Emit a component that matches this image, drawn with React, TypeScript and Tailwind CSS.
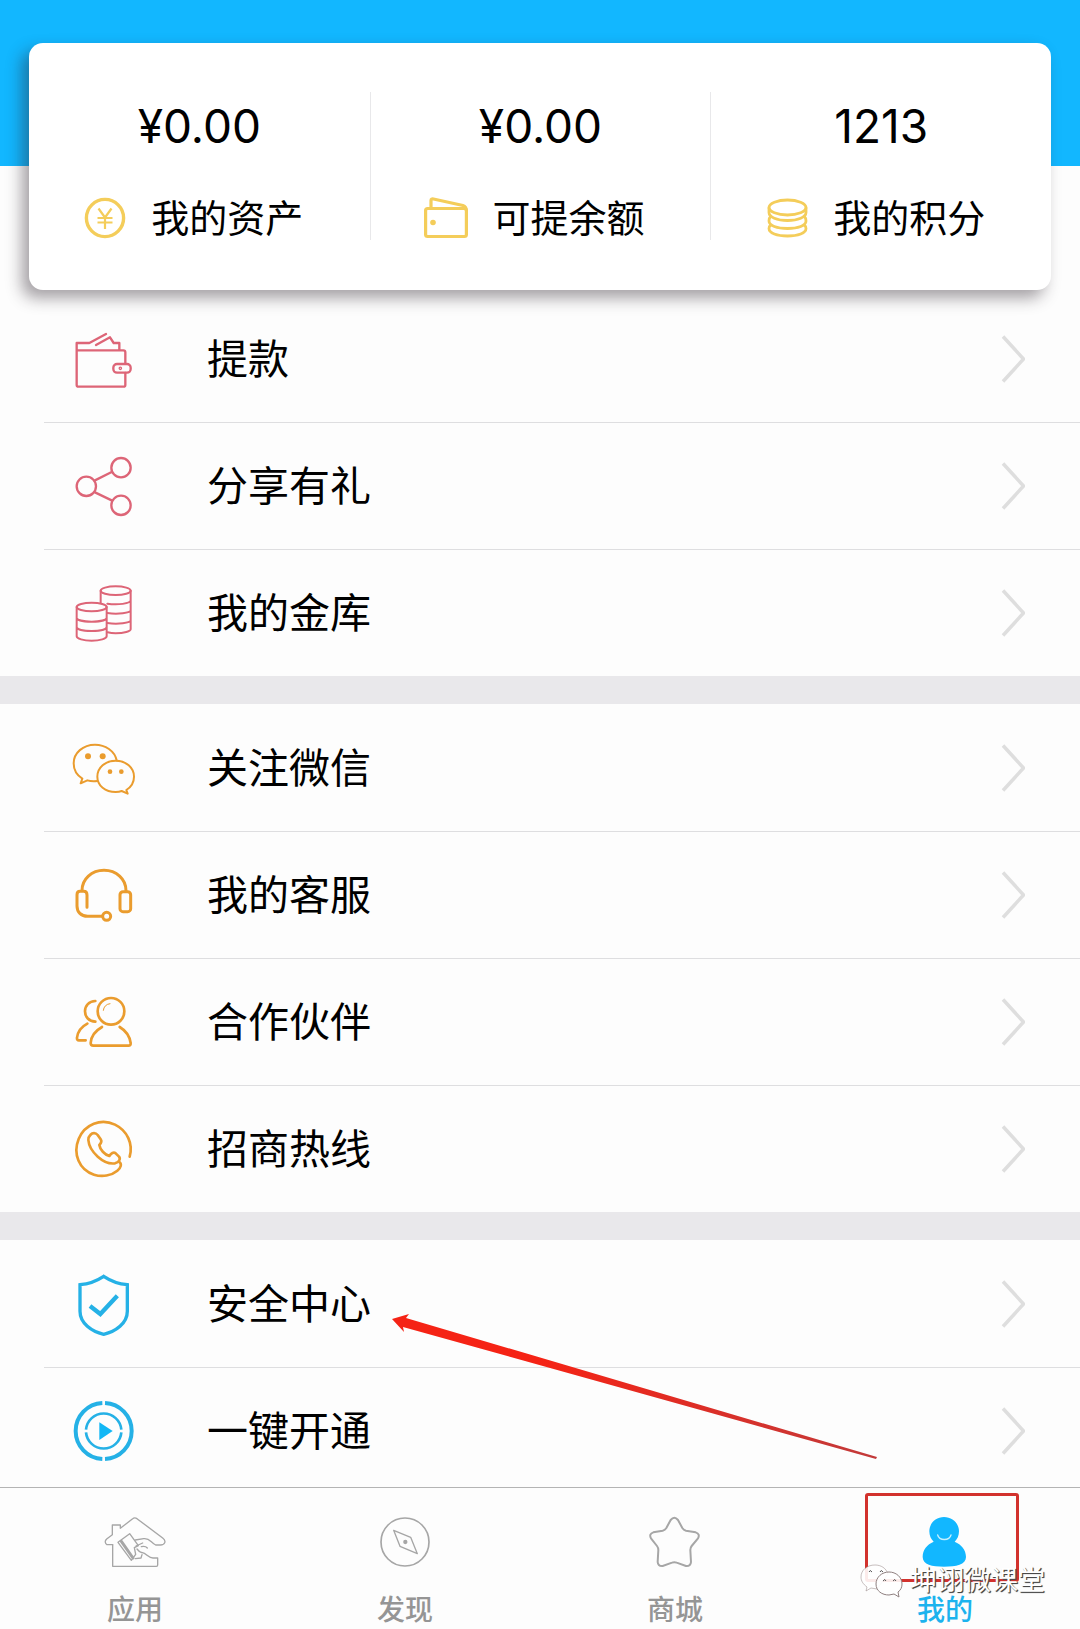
import type { ReactNode } from 'react'

const YELLOW = '#f4cd5a'
const RED = '#dd6577'
const ORANGE = '#ea9c2e'
const BLUE = '#25b1e6'
const GRAY = '#a6a6a6'

// 资产卡片图标
const CoinIcon = () => (
  <svg viewBox="0 0 44 44" className="h-11 w-11 shrink-0" fill="none" stroke={YELLOW} strokeWidth="3.4">
    <circle cx="22" cy="22" r="18.6" />
    <path d="M15.5 12.5 22 21.5l6.5-9M22 21.5V33M14.5 22h15M14.5 26.5h15" strokeWidth="2.2" />
  </svg>
)

const PurseIcon = () => (
  <svg viewBox="0 0 44 44" className="h-11 w-11 shrink-0" fill="none" stroke={YELLOW} strokeWidth="3.2" strokeLinejoin="round">
    <rect x="1.6" y="12.5" width="40.8" height="28" rx="2" />
    <path d="M7 12V4.5Q7 2.500 9.500 3L39 9.500Q42.400 10.500 42.400 15" />
    <circle cx="9" cy="26.5" r="2.8" fill={YELLOW} stroke="none" />
  </svg>
)

const StackIcon = () => (
  <svg viewBox="0 0 44 44" className="h-11 w-11 shrink-0" fill="none" stroke={YELLOW} strokeWidth="2.8">
    <ellipse cx="22.5" cy="11.5" rx="18.5" ry="7.5" />
    <path d="M4 11.5v5c0 4.500 8 8 18.500 8s18.500-3.500 18.500-8v-5" />
    <path d="M5.5 20.500C4.500 21.500 4 23 4 25c0 4.500 8 7.500 18.500 7.500S41 29.500 41 25c0-2-.5-3.500-1.500-4.500" />
    <path d="M5.5 29C4.500 30 4 31 4 32.500c0 4.500 8 7.500 18.500 7.500S41 37 41 32.500c0-1.500-.5-2.500-1.500-3.500" />
  </svg>
)

function RowIcon({ box, color, width = 7, children }: { box: string; color: string; width?: number; children: ReactNode }) {
  return (
    <svg
      viewBox={box}
      className="h-16 w-16 shrink-0"
      fill="none"
      stroke={color}
      strokeWidth={width}
      strokeLinecap="round"
      strokeLinejoin="round"
    >
      {children}
    </svg>
  )
}

const WithdrawIcon = () => (
  <RowIcon box="96 50 192 192" color={RED}>
    <path d="M110 120V98h38l50-27M168 104l42-23 11 17h17v20M110 120h140q6 0 6 6v34M256 188v36q0 5-5 5H115q-5 0-5-5V120" />
    <rect x="220" y="161" width="52" height="26" rx="11" />
    <circle cx="241" cy="174" r="2" />
  </RowIcon>
)

const ShareIcon = () => (
  <RowIcon box="96 432 192 192" color={RED}>
    <circle cx="139" cy="529" r="29" />
    <circle cx="243" cy="473" r="29" />
    <circle cx="243" cy="586" r="29" />
    <path d="m165 511 50-25M165 547l50 24" />
  </RowIcon>
)

const VaultIcon = () => (
  <RowIcon box="96 813 192 192" color={RED} width={6}>
    <ellipse cx="227" cy="842" rx="45" ry="13" />
    <path d="M182 842v36M272 842v116c0 6-20 12-45 12-9 0-17-1-24-3M202 881c30 5 70 0 70-10M202 909c30 5 70 0 70-8M202 939c30 5 70 0 70-8" />
    <ellipse cx="155" cy="891" rx="45" ry="13" />
    <path d="M110 891v88c0 7 20 13 45 13s45-6 45-13v-88M110 923c0 7 20 12 45 12s45-5 45-12M110 951c0 7 20 12 45 12s45-5 45-12" />
  </RowIcon>
)

const WechatIcon = () => (
  <RowIcon box="96 46 192 192" color={ORANGE} width={6}>
    <path d="M230 119c-6-28-34-47-65-47-36 0-64 25-64 56 0 20 10 36 26 46l-5 14 20-9c10 3 19 3 30 2" />
    <path d="M259 208c14-9 23-23 23-40 0-27-24-48-55-48s-55 21-55 48 24 46 55 46c7 0 13-1 18-3l18 8z" />
    <g fill={ORANGE} stroke="none">
      <circle cx="144" cy="107" r="9" />
      <circle cx="188" cy="107" r="9" />
      <circle cx="210" cy="153" r="7" />
      <circle cx="244" cy="153" r="7" />
    </g>
  </RowIcon>
)

const ServiceIcon = () => (
  <RowIcon box="96 429 192 192" color={ORANGE} width={9}>
    <path d="M126 512c0-35 29-61 66-61s66 26 66 61M141 562v-37q0-11-10-11h-11q-9 0-9 10v34c0 18 12 31 32 31h42" />
    <rect x="240" y="515" width="32" height="60" rx="9" />
    <circle cx="200" cy="589" r="12" />
  </RowIcon>
)

const PartnerIcon = () => (
  <RowIcon box="96 90 192 192" color={ORANGE} width={8}>
    <circle cx="213" cy="154" r="40" />
    <path d="M190 151c1-11 9-19 20-20" strokeWidth="3" />
    <path d="M166 123c-19 1-31 14-31 31s12 30 31 31M142 191c-19 10-29 26-31 42q-1 8 6 8h20" />
    <path d="M186 201c-21 12-33 30-34 48q0 8 8 8h105q8 0 7-8c-3-20-13-36-33-48" />
  </RowIcon>
)

const HotlineIcon = () => (
  <RowIcon box="96 471 192 192" color={ORANGE} width={8}>
    <path d="M269 590c11-38-7-78-44-96-42-20-91-1-109 43s1 92 46 107c25 8 52 3 70-12 11-9 14-20 6-26" />
    <path d="M151 525c7-8 16-7 22 0l9 13c5 7 1 12-4 17 2 14 16 29 30 33 5-9 13-13 19-8l10 10c6 8-1 17-12 20-34 5-77-35-80-70-1-6 1-10 6-15z" />
  </RowIcon>
)

const ShieldIcon = () => (
  <RowIcon box="96 94 192 192" color={BLUE} width={10}>
    <path d="M191 107c21 14 46 23 71 25v80c0 36-35 61-71 69-36-8-71-33-71-69v-80c25-2 50-11 71-25z" strokeLinejoin="miter" />
    <path d="m150 196 31 24 51-55" strokeWidth="13" strokeLinecap="butt" strokeLinejoin="miter" />
  </RowIcon>
)

const PlayIcon = () => (
  <RowIcon box="96 477 192 192" color={BLUE}>
    <path d="M187 489a84.100 84.100 0 0 0 0 168M195 489a84.100 84.100 0 0 1 0 168" strokeWidth="12" strokeLinecap="butt" />
    <path d="M138 569a53.200 53.200 0 0 1 106 0M138 577a53.200 53.200 0 0 0 106 0" strokeWidth="8" strokeLinecap="butt" />
    <path d="m178 547 40 26-40 27z" fill="#12b7f5" stroke="none" />
  </RowIcon>
)

function TabIcon({ box, children }: { box: string; children: ReactNode }) {
  return (
    <svg viewBox={box} className="h-14 w-16" fill="none" stroke={GRAY} strokeWidth="5" strokeLinecap="round" strokeLinejoin="round">
      {children}
    </svg>
  )
}

const HomeTabIcon = () => (
  <TabIcon box="129 102 192 168">
    <g strokeWidth="4">
      <path d="M158 194v65h131q4 0 4-4v-21h-14c-14 0-18-14-34-17" />
      <path d="M158 194h-17q-10-8-1-17l17-13v-29h24v10l37-29q6-5 13 0l77 58c12 9 7 21-7 21h-14c-14-6-18-22-36-19l-25 4" />
      <path d="m174 187 35-26 26 36-12 6 4 20-13 18z" />
      <path d="m184 184 35 50" strokeWidth="9" />
      <path d="m228 198 20-9M231 207q6 8 14 11M244 200q12-3 18 4M226 236l17-2 3-10" />
    </g>
  </TabIcon>
)

const DiscoverTabIcon = () => (
  <TabIcon box="940 102 192 168">
    <circle cx="1036" cy="186" r="72" />
    <path d="m1002 151 51 21 20 49-52-22z" strokeWidth="4" />
    <circle cx="1037" cy="186" r="4" fill={GRAY} />
  </TabIcon>
)

const MallTabIcon = () => (
  <TabIcon box="129 222 192 168">
    <path
      d="M212 240q11-13 22 0l13 24q4 6 11 8l29 5q14 5 7 18l-19 23q-4 5-4 12l2 36q-1 13-15 12l-28-10q-7-3-14 0l-28 10q-14 1-15-12l2-36q0-7-4-12l-18-23q-7-13 7-18l28-5q7-2 11-8z"
      strokeWidth="6"
    />
  </TabIcon>
)

const MineTabIcon = () => (
  <TabIcon box="939 222 192 168">
    <path
      d="M1032 231c25 0 45 19 45 43 0 13-5 24-13 31 20 8 34 25 34 46 0 23-30 29-66 29s-64-6-64-29c0-21 13-38 33-46-8-7-13-18-13-31 0-24 19-43 44-43z"
      fill="#12b7ff"
      stroke="none"
    />
    <path d="M1013 285c5 18 35 18 40 0" stroke="#c5f0ff" strokeWidth="4" />
  </TabIcon>
)

const ASSETS = [
  { value: '¥0.00', label: '我的资产', icon: <CoinIcon /> },
  { value: '¥0.00', label: '可提余额', icon: <PurseIcon /> },
  { value: '1213', label: '我的积分', icon: <StackIcon /> },
]

const GROUPS = [
  [
    { label: '提款', icon: <WithdrawIcon /> },
    { label: '分享有礼', icon: <ShareIcon /> },
    { label: '我的金库', icon: <VaultIcon /> },
  ],
  [
    { label: '关注微信', icon: <WechatIcon /> },
    { label: '我的客服', icon: <ServiceIcon /> },
    { label: '合作伙伴', icon: <PartnerIcon /> },
    { label: '招商热线', icon: <HotlineIcon /> },
  ],
  [
    { label: '安全中心', icon: <ShieldIcon />, marked: true },
    { label: '一键开通', icon: <PlayIcon /> },
  ],
]

const TABS = [
  { label: '应用', icon: <HomeTabIcon /> },
  { label: '发现', icon: <DiscoverTabIcon /> },
  { label: '商城', icon: <MallTabIcon /> },
  { label: '我的', icon: <MineTabIcon />, active: true },
]

function MenuRow({ label, icon, first, marked = false }: { label: string; icon: ReactNode; first: boolean; marked?: boolean }) {
  return (
    <li className="relative pl-11">
      <a
        href="#"
        className={`flex h-[127px] items-center pl-7 pr-[55px] ${first ? '' : 'border-t border-[#dedee0]'}`}
      >
        {icon}
        <span className="ml-[71px] flex-1 text-[41px] leading-[60px]">{label}</span>
        <svg viewBox="0 0 24 48" className="h-12 w-6" fill="none" stroke="#dedede" strokeWidth="3.5">
          <path d="M2 1.5 22.500 24 2 46.500" />
        </svg>
      </a>
      {marked && (
        <svg viewBox="0 0 486 148" className="pointer-events-none absolute left-[392px] top-[73px] z-10 h-[148px] w-[486px]">
          <defs>
            <linearGradient id="arrow">
              <stop offset="0.3" stopColor="#f52315" />
              <stop offset="1" stopColor="#c23a3a" />
            </linearGradient>
          </defs>
          <path d="M0 6 17 1l-3 4 471 139-1 2L11 14l1 5z" fill="url(#arrow)" />
        </svg>
      )}
    </li>
  )
}

export default function App() {
  return (
    <div className="flex h-screen flex-col bg-[#fdfdfd] font-['Inter','Noto_Sans_CJK_SC',sans-serif] text-black">
      <main className="min-h-0 flex-1 overflow-hidden">
        <header className="h-[166px] bg-[#12b7ff]" />
        <section className="relative mx-[29px] -mt-[123px] mb-[5px] grid grid-cols-3 rounded-[14px] bg-white pb-[50px] pt-[49px] shadow-[-7px_8px_16px_rgba(40,30,40,0.42)]">
          {ASSETS.map((a, i) => (
            <div key={a.label} className={`flex flex-col items-center ${i > 0 ? 'border-l border-[#e8e8ea]' : ''}`}>
              <span className="text-[46px] leading-[68px]">{a.value}</span>
              <div className="mt-9 flex h-11 items-center gap-6 pr-3">
                {a.icon}
                <span className="whitespace-nowrap text-[38px] leading-[44px]">{a.label}</span>
              </div>
            </div>
          ))}
        </section>
        {GROUPS.map((rows, i) => (
          <ul key={i} className={i > 0 ? 'border-t-[28px] border-[#e9e8eb]' : ''}>
            {rows.map((r, j) => (
              <MenuRow key={r.label} {...r} first={j === 0} />
            ))}
          </ul>
        ))}
      </main>

      <nav className="relative grid shrink-0 grid-cols-4 border-t border-[#b4b4b4] bg-[#fdfdfd]">
        {TABS.map((t) => (
          <a
            key={t.label}
            href="#"
            className={`relative flex flex-col items-center gap-6 pb-[3px] pt-[26px] text-[28px] font-medium leading-8 ${
              t.active ? 'text-[#1cb3ee]' : 'text-[#959595]'
            }`}
          >
            {t.icon}
            {t.label}
            {t.active && <span className="absolute left-[55px] top-[5px] h-[89px] w-[154px] rounded-[3px] border-[3px] border-[#d2322d]" />}
          </a>
        ))}
        {/* 公众号水印 */}
        <div className="pointer-events-none absolute right-[35px] top-[75px] flex items-center gap-[6px]">
          <svg viewBox="0 0 44 36" className="h-9 w-11" fill="#fff" fillOpacity="0.9" stroke="#8f8080" strokeWidth="1" strokeLinejoin="round">
            <path d="M28 11C26 5 21 2 15 2 7 2 1 7 1 14c0 4 2 7 6 10l-1 4 5-3 6 1z" strokeOpacity="0.5" />
            <path d="M38 29c3-2 4-5 4-8 0-7-6-12-13-12s-13 5-13 12 6 11 13 11l5-1 5 3z" />
            <path d="M9 9q1-3 3 0M20 9q1-3 3 0M23 18q2-3 3 0M33 18q2-3 3 0" stroke="#555" fill="none" />
          </svg>
          <span className="text-[27px] leading-[28px] text-white [text-shadow:1px_1px_1px_#444,1px_1px_0_#666]">
            坤诩微课堂
          </span>
        </div>
      </nav>
    </div>
  )
}
